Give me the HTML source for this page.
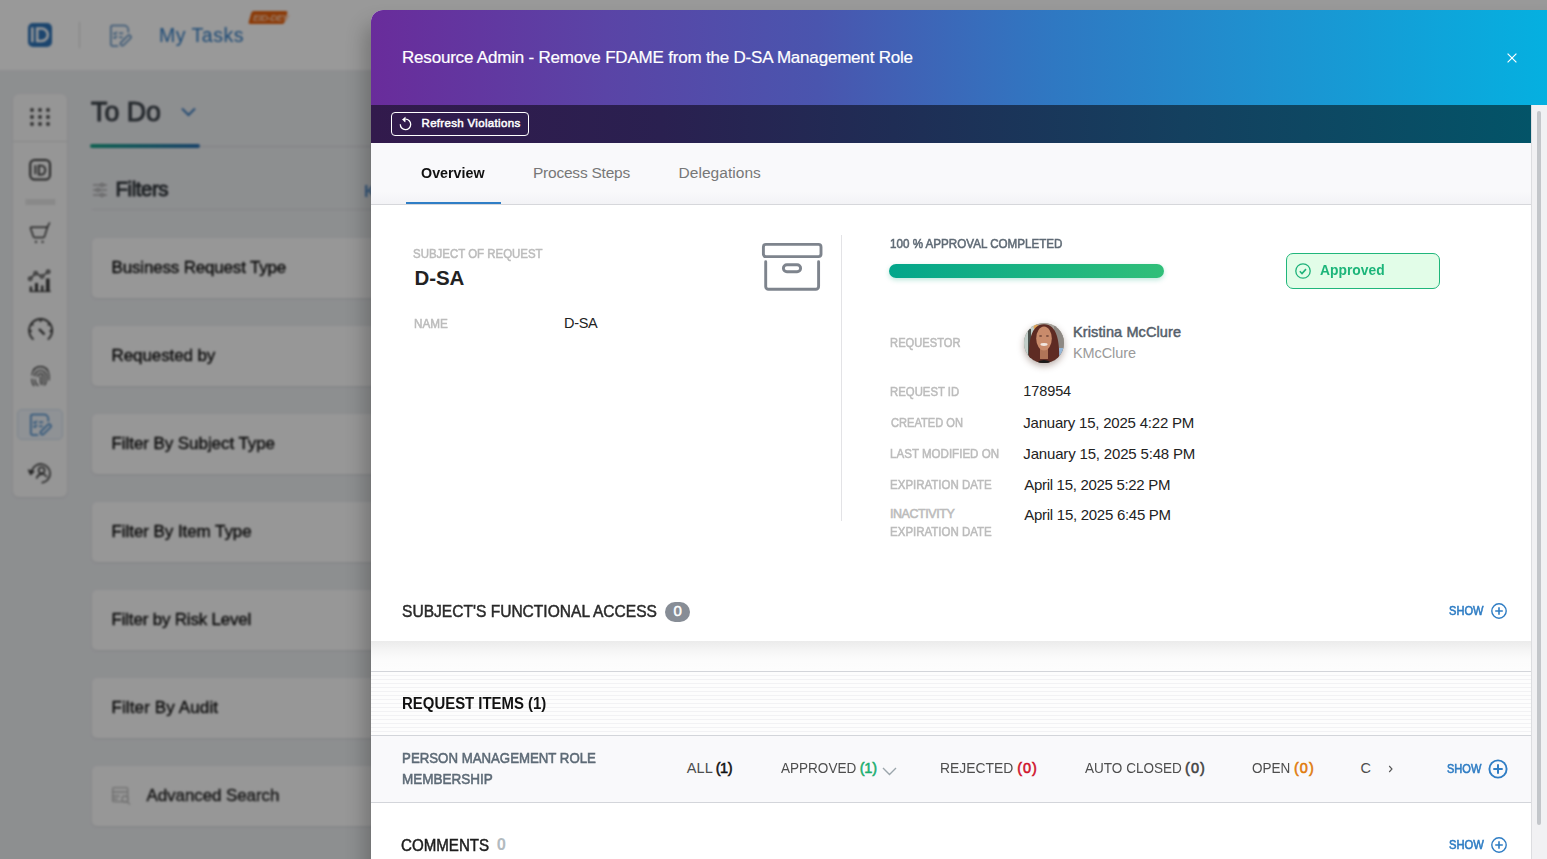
<!DOCTYPE html>
<html><head><meta charset="utf-8">
<style>
*{box-sizing:border-box;margin:0;padding:0}
html,body{width:1547px;height:859px;overflow:hidden;font-family:"Liberation Sans",sans-serif}
body{position:relative;background:#888}
.ab{position:absolute}
.tx{position:absolute;white-space:nowrap;line-height:1;font-family:"Liberation Sans",sans-serif}
svg{position:absolute;overflow:visible}
#bg{position:absolute;left:-20px;top:-20px;width:1587px;height:899px;filter:blur(0.8px);overflow:hidden}
#bgi{position:absolute;left:20px;top:20px;width:1547px;height:859px}
#hdr{position:absolute;left:-20px;top:-20px;width:1587px;height:90px;background:#fff;box-shadow:0 1px 2px rgba(0,0,0,.14)}
#main{position:absolute;left:-20px;top:70px;width:1587px;height:809px;background:#eceef1}
#side{position:absolute;left:13px;top:94px;width:54px;height:403px;background:#fafafa;border-radius:6px;box-shadow:0 1px 3px rgba(0,0,0,.08)}
.card{position:absolute;left:92px;width:320px;height:60px;background:#fcfcfc;border-radius:5px;box-shadow:0 1px 3px rgba(0,0,0,.08)}
#overlay{position:absolute;left:0;top:0;width:1547px;height:859px;background:rgba(0,0,0,0.4)}
#mshadow{position:absolute;left:371px;top:24px;width:1200px;height:900px;border-radius:12px;box-shadow:-6px 0 20px rgba(0,0,0,.24)}
#modal{position:absolute;left:371px;top:10px;width:1176px;height:851px;background:#fff;border-radius:12px 0 10px 0;overflow:hidden}
</style></head><body>
<div id="bg"><div id="bgi">
  <div id="hdr"></div>
  <div id="main"></div>
  <!-- header logo -->
  <div class="ab" style="left:28px;top:23px;width:24px;height:24px;background:#2f74b8;border-radius:5px"></div>
  <svg style="left:28px;top:23px" width="24" height="24" viewBox="0 0 24 24"><path d="M4.3 4.4v14.8" stroke="#fff" stroke-width="2.5" fill="none"/><path d="M9.2 5.4h4.3a6.3 6.35 0 0 1 0 12.7H9.2z" stroke="#fff" stroke-width="2.5" fill="none"/></svg>
  <div class="ab" style="left:79px;top:22px;width:1px;height:26px;background:#dcdcdc"></div>
  <svg style="left:108.5px;top:24px" width="24" height="24" viewBox="0 0 24 24" fill="none" stroke="#5b8fc2" stroke-width="1.5" stroke-linecap="round" stroke-linejoin="round"><path d="M8.6 21.9H3.4a1.5 1.5 0 0 1-1.5-1.5V3a1.5 1.5 0 0 1 1.5-1.5H15a4.3 4.3 0 0 1 4.3 4.3V8"/><path d="M4.8 9.3l1 1 1.8-2M10.6 9.3h3M4.8 13.3l1 1 1.8-2M10.6 13.3h2.5"/><rect x="-1.9" y="-6.6" width="3.8" height="13.2" rx="1.9" transform="translate(16.7 16.4) rotate(45)"/></svg>
  <div class="ab" style="left:250px;top:11px;width:36px;height:13px;background:#e8620e;transform:skewX(-16deg);border-radius:2px"></div>
  <div class="tx" style="left:253px;top:13px;font-size:9.5px;font-weight:bold;color:#ffc9a6;font-style:italic;letter-spacing:-0.4px">EID-DEV</div>
  <!-- sidebar -->
  <div id="side"></div>
  <div class="ab" style="left:13px;top:141px;width:54px;height:1px;background:#e3e3e3"></div>
  <svg style="left:29px;top:107px" width="22" height="20" viewBox="0 0 22 20" fill="#4a4a4a"><circle cx="3" cy="3" r="1.9"/><circle cx="11" cy="3" r="1.9"/><circle cx="19" cy="3" r="1.9"/><circle cx="3" cy="10" r="1.9"/><circle cx="11" cy="10" r="1.9"/><circle cx="19" cy="10" r="1.9"/><circle cx="3" cy="17" r="1.9"/><circle cx="11" cy="17" r="1.9"/><circle cx="19" cy="17" r="1.9"/></svg>
  <svg style="left:29px;top:159px" width="22" height="22" viewBox="0 0 22 22" fill="none" stroke="#3a3a3a" stroke-width="2"><rect x="1.2" y="1" width="19.8" height="19.6" rx="4.5"/><path d="M6.4 6.2v9" stroke-width="1.8"/><path d="M9.8 6.6h2.4a4.1 4.5 0 0 1 0 9h-2.4z" stroke-width="1.8"/></svg>
  <div class="ab" style="left:26px;top:199px;width:30px;height:6px;background:repeating-linear-gradient(90deg,#d0d0d0 0 1px,#f0f0f0 1px 3px)"></div>
  <svg style="left:29px;top:222px" width="22" height="22" viewBox="0 0 22 22" fill="none" stroke="#3a3a3a" stroke-width="1.5" stroke-linejoin="round" stroke-linecap="round"><path d="M2.2 5.2h16.2L15.5 14.6a1.2 1.2 0 0 1-1.1 0.8H5.5a1.2 1.2 0 0 1-1.1-0.8L1.6 6.4a1 1 0 0 1 0.6-1.2z"/><path d="M18.4 5.2L20.5 1"/><circle cx="7" cy="19.9" r="1.1" fill="#3a3a3a" stroke="none"/><circle cx="13.6" cy="19.9" r="1.1" fill="#3a3a3a" stroke="none"/></svg>
  <svg style="left:29px;top:270px" width="22" height="22" viewBox="0 0 22 22" fill="none" stroke="#3a3a3a" stroke-width="1.4"><path d="M1.2 8.8L6.7 3.3 13 6.5 19.2 1.8"/><circle cx="1.2" cy="8.8" r="1.6" fill="#fafafa"/><circle cx="6.7" cy="3.3" r="1.6" fill="#fafafa"/><circle cx="13" cy="6.5" r="1.6" fill="#fafafa"/><circle cx="19.2" cy="1.8" r="1.6" fill="#fafafa"/><path d="M0.7 21.4h21" stroke-width="1.3"/><rect x="0.7" y="16.5" width="2.4" height="5" fill="#3a3a3a" stroke="none"/><rect x="6" y="13" width="3" height="8.5" fill="#3a3a3a" stroke="none"/><rect x="12" y="15.5" width="2.4" height="6" fill="#3a3a3a" stroke="none"/><rect x="17" y="8.5" width="3.6" height="13" fill="#3a3a3a" stroke="none"/></svg>
  <svg style="left:28px;top:318px" width="26" height="24" viewBox="0 0 26 24" fill="none" stroke="#3a3a3a" stroke-width="1.8"><path d="M5.5 21.5A11.5 11.5 0 1 1 19.8 21.5"/><path d="M12.6 1.5v2.5M3.5 5.5l1.8 1.8M21.7 5.5l-1.8 1.8M1.2 13h2.5M24 13h-2.5"/><path d="M11 11l5.5 5.5" stroke-width="2.4"/></svg>
  <svg style="left:31px;top:366px" width="19" height="21" viewBox="0 0 19 21" fill="none" stroke="#3a3a3a" stroke-width="1.2" stroke-linecap="round"><path d="M2.5 4A9 9 0 0 1 16.5 4"/><path d="M1 9a8.5 8.5 0 0 1 17 0v5"/><path d="M1 13v2a8 8 0 0 0 2 4.5"/><path d="M3.8 10a5.7 5.7 0 0 1 11.4 0v5a5 5 0 0 1-2 4"/><path d="M4 13.5a7 7 0 0 0 3 6"/><path d="M6.7 10.5a2.8 2.8 0 0 1 5.6 0v4.5a4 4 0 0 1-2 3.5"/><path d="M9.5 10.5v6.5"/></svg>
  <div class="ab" style="left:17px;top:409px;width:46px;height:31px;background:#eef3f9;border:1px solid #d3e0ee;border-radius:5px"></div>
  <svg style="left:29px;top:413px" width="24" height="24" viewBox="0 0 24 24" fill="none" stroke="#3f86c9" stroke-width="1.5" stroke-linecap="round" stroke-linejoin="round"><path d="M8.6 21.9H3.4a1.5 1.5 0 0 1-1.5-1.5V3a1.5 1.5 0 0 1 1.5-1.5H15a4.3 4.3 0 0 1 4.3 4.3V8"/><path d="M4.8 9.3l1 1 1.8-2M10.6 9.3h3M4.8 13.3l1 1 1.8-2M10.6 13.3h2.5"/><rect x="-1.9" y="-6.6" width="3.8" height="13.2" rx="1.9" transform="translate(16.7 16.4) rotate(45)"/></svg>
  <svg style="left:28px;top:462px" width="26" height="24" viewBox="0 0 26 24" fill="none" stroke="#3a3a3a" stroke-width="1.6" stroke-linecap="round"><path d="M4 8.4A9.3 9.3 0 1 1 14.3 20.6"/><path d="M0.6 8L6.2 9.4 2.9 12.8z" fill="#3a3a3a" stroke-width="1"/><circle cx="13.6" cy="8.2" r="3"/><path d="M8.7 15.9a5.5 5.5 0 0 1 9.8-1.4"/></svg>
  <!-- to do -->
  <svg style="left:181px;top:107px" width="15" height="10" viewBox="0 0 15 10" fill="none" stroke="#3f7fc0" stroke-width="2"><path d="M1 1.5l6.5 6.5 6.5-6.5"/></svg>
  <div class="ab" style="left:90px;top:146px;width:290px;height:1px;background:#d6d8dc"></div>
  <div class="ab" style="left:90px;top:144px;width:110px;height:4px;border-radius:2px;background:linear-gradient(90deg,#16a085,#2a6fb0)"></div>
  <svg style="left:92px;top:182px" width="16" height="16" viewBox="0 0 16 16" fill="none" stroke="#8a8a8a" stroke-width="1"><path d="M1 3h14M1 8h14M1 13h14"/><circle cx="10" cy="3" r="1.6" fill="#eceef1"/><circle cx="6" cy="8" r="1.6" fill="#eceef1"/><circle cx="10" cy="13" r="1.6" fill="#eceef1"/></svg>
  <div class="ab" style="left:92px;top:209px;width:290px;height:1px;background:#d9dbdf"></div>
  <div class="tx" style="left:364px;top:184px;font-size:16px;font-weight:bold;color:#5b93cc">K</div>
  <div class="card" style="top:238px"></div>
  <div class="card" style="top:326px"></div>
  <div class="card" style="top:414px"></div>
  <div class="card" style="top:502px"></div>
  <div class="card" style="top:590px"></div>
  <div class="card" style="top:678px"></div>
  <div class="card" style="top:766px"></div>
  <svg style="left:112px;top:787px" width="19" height="18" viewBox="0 0 19 18" fill="none" stroke="#b8b8b8" stroke-width="1.3"><rect x="0.7" y="0.7" width="15" height="14" rx="1"/><path d="M0.7 5h15M0.7 9h7M0.7 12h5"/><circle cx="13" cy="12" r="3" fill="#fcfcfc"/><path d="M15 14.5l3 3"/></svg>
<div class="tx" style="left:159.0px;top:25.95px;font-size:19.5px;font-weight:normal;letter-spacing:0.5px;color:#2f7bc4;transform:scaleX(1);transform-origin:2px 0;">My Tasks</div>
<div class="tx" style="left:90.7px;top:97.86px;font-size:28px;font-weight:normal;letter-spacing:0px;color:#3f464d;-webkit-text-stroke:1.0px #3f464d;transform:scaleX(0.9562);transform-origin:0px 0;">To Do</div>
<div class="tx" style="left:115.5px;top:178.65px;font-size:20.5px;font-weight:normal;letter-spacing:-0.45px;color:#30363b;-webkit-text-stroke:0.9px #30363b;transform:scaleX(1);transform-origin:1px 0;">Filters</div>
<div class="tx" style="left:111.6px;top:258.91px;font-size:17.0px;font-weight:normal;letter-spacing:-0.18px;color:#111;-webkit-text-stroke:0.35px #111;transform:scaleX(1);transform-origin:1px 0;">Business Request Type</div>
<div class="tx" style="left:111.6px;top:346.91px;font-size:17.0px;font-weight:normal;letter-spacing:-0.109px;color:#111;-webkit-text-stroke:0.35px #111;transform:scaleX(1);transform-origin:1px 0;">Requested by</div>
<div class="tx" style="left:111.5px;top:434.91px;font-size:17.0px;font-weight:normal;letter-spacing:-0.071px;color:#111;-webkit-text-stroke:0.35px #111;transform:scaleX(1);transform-origin:1px 0;">Filter By Subject Type</div>
<div class="tx" style="left:111.5px;top:522.91px;font-size:17.0px;font-weight:normal;letter-spacing:-0.067px;color:#111;-webkit-text-stroke:0.35px #111;transform:scaleX(1);transform-origin:1px 0;">Filter By Item Type</div>
<div class="tx" style="left:111.5px;top:610.91px;font-size:17.0px;font-weight:normal;letter-spacing:-0.195px;color:#111;-webkit-text-stroke:0.35px #111;transform:scaleX(1);transform-origin:1px 0;">Filter by Risk Level</div>
<div class="tx" style="left:111.4px;top:698.76px;font-size:17.0px;font-weight:normal;letter-spacing:0.129px;color:#111;-webkit-text-stroke:0.35px #111;transform:scaleX(1);transform-origin:1px 0;">Filter By Audit</div>
<div class="tx" style="left:146.5px;top:786.71px;font-size:17.0px;font-weight:normal;letter-spacing:-0.093px;color:#222;-webkit-text-stroke:0.35px #222;transform:scaleX(1);transform-origin:0px 0;">Advanced Search</div>
</div></div>
<div id="overlay"></div>
<div id="mshadow"></div>
<div id="modal"></div>
<!-- modal header -->
<div class="ab" style="left:371px;top:10px;width:1176px;height:95px;border-radius:12px 0 0 0;background:linear-gradient(90deg,#692c9b 0%,#5a44a6 20%,#4a55ae 38%,#2f78c2 58%,#1f90cf 75%,#05b0e0 100%)"></div>
<svg style="left:1506.5px;top:53.3px" width="10" height="10" viewBox="0 0 10 10" stroke="#fff" stroke-width="1.2"><path d="M0.6 0.6l8.8 8.8M9.4 0.6L0.6 9.4"/></svg>
<div class="ab" style="left:371px;top:105px;width:1160px;height:38px;background:linear-gradient(90deg,#321a4c 0%,#2a2050 25%,#1f2d55 45%,#14405f 70%,#035468 100%)"></div>
<div class="ab" style="left:391px;top:112px;width:138px;height:24px;border:1px solid #fff;border-radius:4px"></div>
<svg style="left:399px;top:117px" width="14" height="14" viewBox="0 0 14 14" fill="none" stroke="#fff" stroke-width="1.3"><path d="M1.3 7.2A5.2 5.2 0 1 0 6.6 2.2"/><path d="M3.4 2.6L6.3 0.3 6.1 5.1z" fill="#fff" stroke-width="0.6"/></svg>
<!-- scrollbar -->
<div class="ab" style="left:1531px;top:105px;width:16px;height:760px;background:#f1f1f3;border-left:1px solid #dcdde0"></div>
<div class="ab" style="left:1537px;top:111px;width:4px;height:714px;background:#c3c6ca;border-radius:2px"></div>
<!-- tabs -->
<div class="ab" style="left:371px;top:143px;width:1160px;height:62px;background:linear-gradient(180deg,#f9f9fb 0%,#f9f9fb 80%,#f3f3f6 100%);border-bottom:1px solid #d6d7db"></div>
<div class="ab" style="left:406px;top:202px;width:95px;height:2px;background:#2f7ec6"></div>
<!-- overview content -->
<div class="ab" style="left:841px;top:235px;width:1px;height:286px;background:#e3e3e6"></div>
<svg style="left:760px;top:240px" width="66" height="54" viewBox="0 0 66 54" fill="none" stroke="#7e848d" stroke-width="2.9" stroke-linecap="round" stroke-linejoin="round"><rect x="3.4" y="4.4" width="57.6" height="12.2" rx="2.5"/><path d="M5.7 21.8V46.5a2.8 2.8 0 0 0 2.8 2.8h47.3a2.8 2.8 0 0 0 2.8-2.8V21.8"/><rect x="23.4" y="24.7" width="17.2" height="7.1" rx="3.5"/></svg>
<div class="ab" style="left:889px;top:264px;width:275px;height:14px;border-radius:7px;background:linear-gradient(90deg,#03a68b,#30bf79);box-shadow:0 2px 5px rgba(20,170,130,.28)"></div>
<div class="ab" style="left:1286px;top:253px;width:154px;height:36px;border:1.5px solid #20b67b;border-radius:7px;background:#e2fde8"></div>
<svg style="left:1295px;top:263px" width="16" height="16" viewBox="0 0 16 16" fill="none" stroke="#1eb27a" stroke-width="1.3"><circle cx="8" cy="8" r="7.2"/><path d="M4.8 8.3l2.2 2.2 4-4.4" stroke-width="1.6"/></svg>
<!-- avatar -->
<div class="ab" style="left:1024px;top:323px;width:40px;height:40px;border-radius:50%;overflow:hidden;box-shadow:0 3px 7px rgba(70,40,30,.38);background:#a9a49c">
<svg style="left:0;top:0" width="40" height="40" viewBox="0 0 40 40"><rect width="40" height="40" fill="#a7a29a"/><rect x="0" y="0" width="11" height="40" fill="#c2cfca"/><rect x="4" y="6" width="3" height="30" fill="#4a4f4a"/><rect x="30" y="0" width="10" height="40" fill="#8d8883"/><rect x="31" y="25" width="9" height="8" fill="#94b6d8"/><circle cx="12" cy="4" r="2.5" fill="#e0a55a"/><path d="M5 40C4 18 7 1.5 20 1.2 33 1.5 36 18 35 40z" fill="#5e2b23"/><rect x="16" y="24" width="8" height="12" fill="#b07558"/><ellipse cx="20" cy="15.5" rx="7.8" ry="12" fill="#c98b6b"/><ellipse cx="16.6" cy="13" rx="1.6" ry="0.8" fill="#6a4034"/><ellipse cx="23.4" cy="13" rx="1.6" ry="0.8" fill="#6a4034"/><ellipse cx="20" cy="21.5" rx="3.6" ry="1.4" fill="#f1e6df"/><path d="M12 40Q20 34 28 40z" fill="#1a1a1a"/></svg>
</div>
<!-- functional access -->
<div class="ab" style="left:371px;top:641px;width:1160px;height:30px;background:linear-gradient(180deg,#ebebeb 0%,#f6f6f6 35%,#fcfcfc 65%,#fdfdfd 100%)"></div>
<div class="ab" style="left:665px;top:602px;width:25px;height:20px;border-radius:10px;background:#878d96"></div>
<svg style="left:1491px;top:603px" width="16" height="16" viewBox="0 0 16 16" fill="none" stroke="#2f7dc4" stroke-width="1.4"><circle cx="8" cy="8" r="7.2"/><path d="M8 4.2v7.6M4.2 8h7.6" stroke-width="1.6"/></svg>
<!-- request items -->
<div class="ab" style="left:371px;top:671px;width:1160px;height:65px;border-top:1px solid #d3d5da;border-bottom:1px solid #d3d5da;background:repeating-linear-gradient(180deg,#fdfdfd 0 3px,#f2f2f4 3px 4px)"></div>
<div class="ab" style="left:371px;top:736px;width:1160px;height:67px;background:#f9f9fb;border-bottom:1px solid #d3d5da"></div>
<svg style="left:882px;top:767px" width="15" height="9" viewBox="0 0 15 9" fill="none" stroke="#9ba5ab" stroke-width="1.4"><path d="M1 1l6.5 6.5L14 1"/></svg>
<svg style="left:1387px;top:764px" width="7" height="10" viewBox="0 0 7 10" fill="none" stroke="#555" stroke-width="1.1"><path d="M2.2 2l2.8 3-2.8 3"/></svg>
<svg style="left:1488px;top:759px" width="20" height="20" viewBox="0 0 20 20" fill="none" stroke="#2f7dc4" stroke-width="1.9"><circle cx="10" cy="10" r="8.6"/><path d="M10 5.3v9.4M5.3 10h9.4" stroke-width="2"/></svg>
<!-- comments -->
<svg style="left:1491px;top:837px" width="16" height="16" viewBox="0 0 16 16" fill="none" stroke="#2f7dc4" stroke-width="1.4"><circle cx="8" cy="8" r="7.2"/><path d="M8 4.2v7.6M4.2 8h7.6" stroke-width="1.6"/></svg>

<div class="tx" style="left:402.0px;top:48.56px;font-size:17.0px;font-weight:normal;letter-spacing:-0.197px;color:#fff;-webkit-text-stroke:0.2px #fff;transform:scaleX(1);transform-origin:1px 0;">Resource Admin - Remove FDAME from the D-SA Management Role</div>
<div class="tx" style="left:421.5px;top:118.34px;font-size:11.5px;font-weight:normal;letter-spacing:0.324px;color:#fff;-webkit-text-stroke:0.5px #fff;transform:scaleX(1);transform-origin:1px 0;">Refresh Violations</div>
<div class="tx" style="left:421.4px;top:165.42px;font-size:15.5px;font-weight:bold;letter-spacing:0px;color:#111;transform:scaleX(0.9206);transform-origin:1px 0;">Overview</div>
<div class="tx" style="left:533.0px;top:165.42px;font-size:15.5px;font-weight:normal;letter-spacing:-0.225px;color:#777;transform:scaleX(1);transform-origin:1px 0;">Process Steps</div>
<div class="tx" style="left:678.5px;top:165.42px;font-size:15.5px;font-weight:normal;letter-spacing:0.05px;color:#777;transform:scaleX(1);transform-origin:1px 0;">Delegations</div>
<div class="tx" style="left:413.2px;top:248.39px;font-size:12.5px;font-weight:normal;letter-spacing:0px;color:#bcbcbc;-webkit-text-stroke:0.55px #bcbcbc;transform:scaleX(0.9156);transform-origin:1px 0;">SUBJECT OF REQUEST</div>
<div class="tx" style="left:414.4px;top:267.55px;font-size:20.5px;font-weight:bold;letter-spacing:-0.033px;color:#222;transform:scaleX(1);transform-origin:1px 0;">D-SA</div>
<div class="tx" style="left:413.6px;top:318.34px;font-size:12.5px;font-weight:normal;letter-spacing:0px;color:#bcbcbc;-webkit-text-stroke:0.55px #bcbcbc;transform:scaleX(0.9371);transform-origin:1px 0;">NAME</div>
<div class="tx" style="left:564.0px;top:315.83px;font-size:14.5px;font-weight:normal;letter-spacing:-0.333px;color:#222;transform:scaleX(1);transform-origin:1px 0;">D-SA</div>
<div class="tx" style="left:890.0px;top:237.54px;font-size:12.5px;font-weight:normal;letter-spacing:0px;color:#5f6a75;-webkit-text-stroke:0.55px #5f6a75;transform:scaleX(0.9293);transform-origin:1px 0;">100 % APPROVAL COMPLETED</div>
<div class="tx" style="left:1320.0px;top:261.92px;font-size:15.0px;font-weight:bold;letter-spacing:0px;color:#1cb57a;transform:scaleX(0.9221);transform-origin:1px 0;">Approved</div>
<div class="tx" style="left:890.0px;top:336.84px;font-size:12.5px;font-weight:normal;letter-spacing:0px;color:#bcbcbc;-webkit-text-stroke:0.55px #bcbcbc;transform:scaleX(0.891);transform-origin:1px 0;">REQUESTOR</div>
<div class="tx" style="left:1073.0px;top:325.48px;font-size:14.5px;font-weight:normal;letter-spacing:0.113px;color:#56606a;-webkit-text-stroke:0.5px #56606a;transform:scaleX(1);transform-origin:1px 0;">Kristina McClure</div>
<div class="tx" style="left:1073.0px;top:346.48px;font-size:14.5px;font-weight:normal;letter-spacing:-0.1px;color:#9a9a9a;transform:scaleX(1);transform-origin:1px 0;">KMcClure</div>
<div class="tx" style="left:890.0px;top:386.34px;font-size:12.5px;font-weight:normal;letter-spacing:0px;color:#bcbcbc;-webkit-text-stroke:0.55px #bcbcbc;transform:scaleX(0.9067);transform-origin:1px 0;">REQUEST ID</div>
<div class="tx" style="left:1023.3px;top:384.23px;font-size:14.5px;font-weight:normal;letter-spacing:-0.1px;color:#222;transform:scaleX(1);transform-origin:1px 0;">178954</div>
<div class="tx" style="left:891.0px;top:416.54px;font-size:12.5px;font-weight:normal;letter-spacing:0px;color:#bcbcbc;-webkit-text-stroke:0.55px #bcbcbc;transform:scaleX(0.8875);transform-origin:0px 0;">CREATED ON</div>
<div class="tx" style="left:1023.3px;top:414.83px;font-size:15.0px;font-weight:normal;letter-spacing:-0.217px;color:#222;transform:scaleX(1);transform-origin:1px 0;">January 15, 2025 4:22 PM</div>
<div class="tx" style="left:890.0px;top:448.44px;font-size:12.5px;font-weight:normal;letter-spacing:0px;color:#bcbcbc;-webkit-text-stroke:0.55px #bcbcbc;transform:scaleX(0.9241);transform-origin:1px 0;">LAST MODIFIED ON</div>
<div class="tx" style="left:1023.3px;top:445.73px;font-size:15.0px;font-weight:normal;letter-spacing:-0.17px;color:#222;transform:scaleX(1);transform-origin:1px 0;">January 15, 2025 5:48 PM</div>
<div class="tx" style="left:890.0px;top:479.44px;font-size:12.5px;font-weight:normal;letter-spacing:0px;color:#bcbcbc;-webkit-text-stroke:0.55px #bcbcbc;transform:scaleX(0.9182);transform-origin:1px 0;">EXPIRATION DATE</div>
<div class="tx" style="left:1024.3px;top:476.73px;font-size:15.0px;font-weight:normal;letter-spacing:-0.31px;color:#222;transform:scaleX(1);transform-origin:0px 0;">April 15, 2025 5:22 PM</div>
<div class="tx" style="left:890.0px;top:507.54px;font-size:12.5px;font-weight:normal;letter-spacing:-0.444px;color:#bcbcbc;-webkit-text-stroke:0.55px #bcbcbc;transform:scaleX(1);transform-origin:1px 0;">INACTIVITY</div>
<div class="tx" style="left:890.0px;top:526.44px;font-size:12.5px;font-weight:normal;letter-spacing:0px;color:#bcbcbc;-webkit-text-stroke:0.55px #bcbcbc;transform:scaleX(0.9182);transform-origin:1px 0;">EXPIRATION DATE</div>
<div class="tx" style="left:1024.3px;top:507.33px;font-size:15.0px;font-weight:normal;letter-spacing:-0.276px;color:#222;transform:scaleX(1);transform-origin:0px 0;">April 15, 2025 6:45 PM</div>
<div class="tx" style="left:402.0px;top:602.57px;font-size:17.0px;font-weight:normal;letter-spacing:0px;color:#2a2a2a;-webkit-text-stroke:0.5px #2a2a2a;transform:scaleX(0.9152);transform-origin:1px 0;">SUBJECT'S FUNCTIONAL ACCESS</div>
<div class="tx" style="left:1448.9px;top:605.24px;font-size:12.5px;font-weight:normal;letter-spacing:0px;color:#2f7dc4;-webkit-text-stroke:0.6px #2f7dc4;transform:scaleX(0.8868);transform-origin:0px 0;">SHOW</div>
<div class="tx" style="left:401.6px;top:696.02px;font-size:16.0px;font-weight:bold;letter-spacing:0px;color:#111;transform:scaleX(0.9327);transform-origin:1px 0;">REQUEST ITEMS (1)</div>
<div class="tx" style="left:401.9px;top:750.73px;font-size:14.5px;font-weight:normal;letter-spacing:0px;color:#5d6a76;-webkit-text-stroke:0.55px #5d6a76;transform:scaleX(0.9123);transform-origin:1px 0;">PERSON MANAGEMENT ROLE</div>
<div class="tx" style="left:401.9px;top:771.78px;font-size:14.5px;font-weight:normal;letter-spacing:0px;color:#5d6a76;-webkit-text-stroke:0.55px #5d6a76;transform:scaleX(0.9302);transform-origin:1px 0;">MEMBERSHIP</div>
<div class="tx" style="left:400.7px;top:836.77px;font-size:16.5px;font-weight:normal;letter-spacing:0px;color:#1e1e1e;-webkit-text-stroke:0.5px #1e1e1e;transform:scaleX(0.9147);transform-origin:1px 0;">COMMENTS</div>
<div class="tx" style="left:1448.7px;top:839.44px;font-size:12.5px;font-weight:normal;letter-spacing:0px;color:#2f7dc4;-webkit-text-stroke:0.6px #2f7dc4;transform:scaleX(0.8974);transform-origin:0px 0;">SHOW</div>
<div class="tx" style="left:1447.0px;top:763.49px;font-size:12.5px;font-weight:normal;letter-spacing:0px;color:#2f7dc4;-webkit-text-stroke:0.6px #2f7dc4;transform:scaleX(0.8816);transform-origin:0px 0;">SHOW</div>
<div class="tx" style="left:686.8px;top:760.73px;font-size:14.5px;font-weight:normal;letter-spacing:0.1px;color:#4d4d4d;transform:scaleX(1);transform-origin:0px 0;">ALL</div>
<div class="tx" style="left:715.7px;top:760.73px;font-size:14.5px;font-weight:normal;letter-spacing:-0.4px;color:#111;-webkit-text-stroke:0.55px #111;transform:scaleX(1);transform-origin:1px 0;">(1)</div>
<div class="tx" style="left:781.3px;top:760.73px;font-size:14.5px;font-weight:normal;letter-spacing:0px;color:#4d4d4d;transform:scaleX(0.9338);transform-origin:0px 0;">APPROVED</div>
<div class="tx" style="left:859.7px;top:760.73px;font-size:14.5px;font-weight:normal;letter-spacing:-0.2px;color:#1aae6f;-webkit-text-stroke:0.55px #1aae6f;transform:scaleX(1);transform-origin:1px 0;">(1)</div>
<div class="tx" style="left:940.4px;top:760.73px;font-size:14.5px;font-weight:normal;letter-spacing:0px;color:#4d4d4d;transform:scaleX(0.9573);transform-origin:1px 0;">REJECTED</div>
<div class="tx" style="left:1017.2px;top:760.73px;font-size:14.5px;font-weight:normal;letter-spacing:1.0px;color:#d0112b;-webkit-text-stroke:0.55px #d0112b;transform:scaleX(1);transform-origin:1px 0;">(0)</div>
<div class="tx" style="left:1085.3px;top:760.73px;font-size:14.5px;font-weight:normal;letter-spacing:0px;color:#4d4d4d;transform:scaleX(0.934);transform-origin:0px 0;">AUTO CLOSED</div>
<div class="tx" style="left:1185.1px;top:760.73px;font-size:14.5px;font-weight:normal;letter-spacing:1.0px;color:#444;-webkit-text-stroke:0.55px #444;transform:scaleX(1);transform-origin:1px 0;">(0)</div>
<div class="tx" style="left:1252.3px;top:760.73px;font-size:14.5px;font-weight:normal;letter-spacing:0px;color:#4d4d4d;transform:scaleX(0.9308);transform-origin:1px 0;">OPEN</div>
<div class="tx" style="left:1294.0px;top:760.73px;font-size:14.5px;font-weight:normal;letter-spacing:1.0px;color:#e07b0c;-webkit-text-stroke:0.55px #e07b0c;transform:scaleX(1);transform-origin:1px 0;">(0)</div>
<div class="tx" style="left:1360.6px;top:760.73px;font-size:14.5px;font-weight:normal;letter-spacing:0px;color:#4d4d4d;transform:scaleX(1);transform-origin:1px 0;">C</div>
<div class="tx" style="left:496.8px;top:835.72px;font-size:16.5px;font-weight:bold;letter-spacing:0px;color:#b3bbc0;transform:scaleX(1);transform-origin:1px 0;">0</div>
<div class="tx" style="left:673.6px;top:602.73px;font-size:15px;font-weight:normal;letter-spacing:0px;color:#fff;-webkit-text-stroke:0.5px #fff;transform:scaleX(1);transform-origin:0px 0;">0</div>
</body></html>
